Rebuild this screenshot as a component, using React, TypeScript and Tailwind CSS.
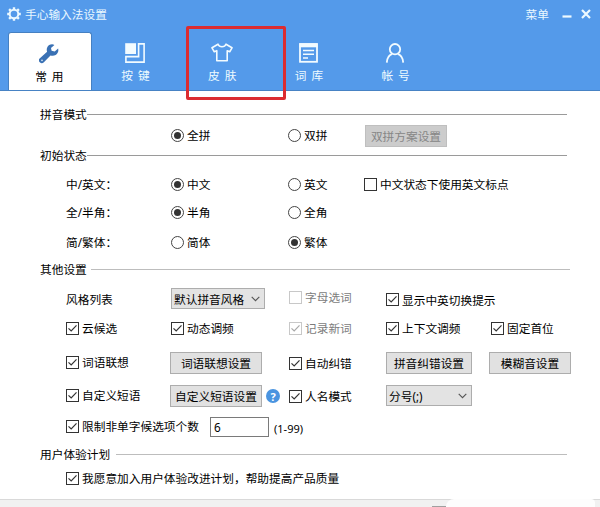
import React from 'react';
import clsx from 'clsx';

const labelFont = "font-['Noto_Sans','Noto_Sans_CJK_SC',sans-serif]";

function GearIcon() {
  return (
    <svg width="14" height="14" viewBox="0 0 14 14" fill="none" stroke="#eaf8ff">
      <circle cx="7" cy="7" r="4.3" strokeWidth="2" />
      <path
        d="M7 0.2v2M7 11.8v2M0.2 7h2M11.8 7h2M2.1 2.1l1.5 1.5M10.4 10.4l1.5 1.5M2.1 11.9l1.5-1.5M10.4 3.6l1.5-1.5"
        strokeWidth="2.4"
      />
    </svg>
  );
}

function WrenchIcon() {
  return (
    <svg width="20" height="20" viewBox="0 0 20 20" fill="#3a71b4">
      <path d="M15.4 0.9C12.6-0.4 9.4 0.8 8.2 3.5c-0.6 1.4-0.6 2.9-0.1 4.2L0.9 14.2a2.7 2.7 0 0 0-0.1 4 2.8 2.8 0 0 0 4.1 0l6.6-6.7c2.9 1 6-0.1 7.3-2.9 0.6-1.3 0.7-2.8 0.3-4.1l-3.4 3.1-3.1-0.8-0.6-2.9z" />
      <circle cx="3" cy="16.4" r="0.8" fill="#dce9f7" />
    </svg>
  );
}

function KeysIcon() {
  return (
    <svg width="20" height="20" viewBox="0 0 20 20" fill="none" stroke="#f2fbff" strokeWidth="1.6">
      <rect x="0.2" y="0.2" width="10.8" height="10.8" fill="#f2fbff" stroke="none" />
      <path d="M13.6 0.9h5.5v18.2H0.9v-5.5h12.7z" />
    </svg>
  );
}

function ShirtIcon() {
  return (
    <svg width="22" height="19" viewBox="0 0 22 19" fill="none" stroke="#f2fbff" strokeWidth="1.6" strokeLinejoin="round">
      <path d="M7 1.2 1 4.8l2.3 4 2.5-1.1v10h10.4v-10l2.5 1.1 2.3-4-6-3.6c-1.3 3.3-6.7 3.3-8 0z" />
    </svg>
  );
}

function BookIcon() {
  return (
    <svg width="19" height="20" viewBox="0 0 19 20" fill="none" stroke="#f2fbff">
      <rect x="1" y="1" width="17" height="17.8" strokeWidth="1.8" />
      <path d="M0.5 2.4h18" strokeWidth="3.8" />
      <path d="M4 7.5h11M4 11.2h11M4 14.9h5" strokeWidth="1.5" />
    </svg>
  );
}

function UserIcon() {
  return (
    <svg width="20" height="20" viewBox="0 0 20 20" fill="none" stroke="#f2fbff" strokeWidth="1.8">
      <circle cx="10" cy="6.2" r="5.2" />
      <path d="M1.8 19.6c0.2-4.4 2-7.5 5.3-8.8M18.2 19.6c-0.2-4.4-2-7.5-5.3-8.8" />
    </svg>
  );
}

const tabs = [
  { label: '常 用', icon: <WrenchIcon />, active: true },
  { label: '按 键', icon: <KeysIcon /> },
  { label: '皮 肤', icon: <ShirtIcon /> },
  { label: '词 库', icon: <BookIcon /> },
  { label: '帐 号', icon: <UserIcon /> },
];

function Check({ label, checked = true, disabled = false, className = '' }: { label: string; checked?: boolean; disabled?: boolean; className?: string }) {
  return (
    <label className={clsx('flex items-center gap-[3px] whitespace-nowrap', disabled && 'text-[#7c7c7c]', className)}>
      <span className={clsx('flex h-[13px] w-[13px] shrink-0 border bg-white', disabled ? 'border-[#c8c8c8] text-[#a8a8a8]' : 'border-[#333] text-[#333]')}>
        {checked && (
          <svg width="11" height="11" viewBox="0 0 11 11" fill="none" stroke="currentColor" strokeWidth="1.2">
            <path d="M1.5 5.3 4.2 8l5.3-5.6" />
          </svg>
        )}
      </span>
      <span>{label}</span>
    </label>
  );
}

function Radio({ label, checked = false }: { label: string; checked?: boolean }) {
  return (
    <label className="flex items-center gap-[3px] whitespace-nowrap">
      <span className="flex h-[13px] w-[13px] shrink-0 items-center justify-center rounded-full border border-[#444] bg-white">
        {checked && <span className="h-[7px] w-[7px] rounded-full bg-[#333]" />}
      </span>
      <span>{label}</span>
    </label>
  );
}

function Button({ children, disabled = false, className = '' }: { children: React.ReactNode; disabled?: boolean; className?: string }) {
  return (
    <button
      className={clsx(
        'flex h-[22px] items-center justify-center whitespace-nowrap border',
        disabled ? 'border-[#bfbfbf] bg-[#cccccc] text-[#868686]' : 'border-[#adadad] bg-[#e1e1e1]',
        className
      )}
    >
      {children}
    </button>
  );
}

function Select({ value, className = '' }: { value: string; className?: string }) {
  return (
    <div className={clsx('flex h-[21px] items-center justify-between border border-[#adadad] bg-[#e3e3e3] pr-[4px] pl-[2px] whitespace-nowrap', className)}>
      <span>{value}</span>
      <svg width="9" height="6" viewBox="0 0 9 6" fill="none" stroke="#555" strokeWidth="1.1">
        <path d="M0.7 0.8 4.5 4.6 8.3 0.8" />
      </svg>
    </div>
  );
}

function SectionTitle({ title, className = '' }: { title: string; className?: string }) {
  return (
    <div className={clsx('flex h-[18px] items-center pl-[40px]', className)}>
      <span className="whitespace-nowrap">{title}</span>
      <span className="h-px flex-1 bg-[#9a9a9a]" />
    </div>
  );
}

const stateRow = 'grid h-[28px] grid-cols-[105px_117px_76px_1fr] items-center pl-[66px]';
const otherRow = 'grid grid-cols-[105px_118px_97px_105px_1fr] items-center pl-[66px]';

export default function App() {
  return (
    <div className={clsx('relative flex h-[507px] w-[600px] flex-col overflow-hidden bg-white text-[11.7px] leading-[18px] text-black', labelFont)}>
      <header className="flex h-[91px] shrink-0 flex-col border-b border-[#4783c4] bg-[#549aea]">
        <div className="flex h-[32px] shrink-0 items-center pr-[8px] pb-[4px] pl-[7px] text-[#eaf8ff]">
          <GearIcon />
          <span className="ml-[4px]">手心输入法设置</span>
          <span className="ml-auto">菜单</span>
          <svg className="ml-[13px]" width="30" height="12" viewBox="0 0 30 12" fill="none" stroke="#eefaff" strokeWidth="2.2">
            <path d="M0.5 8.5h9" />
            <path d="m20 2 8 8M28 2l-8 8" />
          </svg>
        </div>
        <nav className="grid h-[59px] grid-cols-[86.7px_86.7px_86.7px_86.7px_86.7px] pl-[6px]">
          {tabs.map((tab) => (
            <div
              key={tab.label}
              className={clsx(
                'flex flex-col items-center pt-[10px] pr-[2px]',
                tab.active ? 'mr-[1px] ml-[2px] rounded-t-[3px] border border-b-0 border-[#4580c2] bg-white text-black' : 'text-[#eefaff]'
              )}
            >
              <span className="flex h-[21px] items-center">{tab.icon}</span>
              <span className="mt-[3px] pl-[2px] tracking-[1px]">{tab.label}</span>
            </div>
          ))}
        </nav>
      </header>

      <main className="flex flex-1 flex-col pt-[14px]">
        <SectionTitle title="拼音模式" className="mr-[33px]" />
        <div className="mt-[2px] grid h-[22px] grid-cols-[105px_117px_77px_1fr] items-center pl-[66px]">
          <span />
          <div className="pb-[2px]"><Radio label="全拼" checked /></div>
          <div className="pb-[2px]"><Radio label="双拼" /></div>
          <Button disabled className="w-[82px]">双拼方案设置</Button>
        </div>

        <SectionTitle title="初始状态" className="-mt-px mr-[33px]" />
        <div className={clsx(stateRow, 'mt-[6px]')}>
          <span>中/英文：</span>
          <Radio label="中文" checked />
          <Radio label="英文" />
          <Check label="中文状态下使用英文标点" checked={false} />
        </div>
        <div className={stateRow}>
          <span>全/半角：</span>
          <Radio label="半角" checked />
          <Radio label="全角" />
        </div>
        <div className={clsx(stateRow, 'mt-[2px]')}>
          <span>简/繁体：</span>
          <Radio label="简体" />
          <Radio label="繁体" checked />
        </div>

        <SectionTitle title="其他设置" className="mt-[4px] mr-[30px] [&>span:last-child]:ml-[4px] [&>span:last-child]:bg-[#bdbdbd]" />
        <div className={clsx(otherRow, 'mt-[10px] h-[21px]')}>
          <span>风格列表</span>
          <Select value="默认拼音风格" className="w-[94px]" />
          <Check label="字母选词" checked={false} disabled className="mb-[3px]" />
          <Check label="显示中英切换提示" className="mt-[2px]" />
        </div>
        <div className={clsx(otherRow, 'mt-[9px] h-[20px]')}>
          <Check label="云候选" />
          <Check label="动态调频" />
          <Check label="记录新词" disabled />
          <Check label="上下文调频" />
          <Check label="固定首位" />
        </div>
        <div className={clsx(otherRow, 'mt-[14px] h-[22px]')}>
          <Check label="词语联想" className="mb-[2px]" />
          <Button className="-ml-px w-[92px]">词语联想设置</Button>
          <Check label="自动纠错" />
          <Button className="w-[86px]">拼音纠错设置</Button>
          <Button className="-ml-[2px] w-[82px]">模糊音设置</Button>
        </div>
        <div className={clsx(otherRow, 'mt-[11px] h-[22px]')}>
          <Check label="自定义短语" className="mb-[2px]" />
          <div className="-ml-px flex items-center gap-[4px]">
            <Button className="w-[92px]">自定义短语设置</Button>
            <span className="flex h-[14px] w-[14px] items-center justify-center rounded-full bg-[#4a94e0] text-[11px] leading-none font-bold text-white">?</span>
          </div>
          <Check label="人名模式" />
          <Select value="分号(;)" className="mb-px w-[86px]" />
        </div>
        <div className="mt-[10px] flex h-[20px] items-center pl-[66px]">
          <Check label="限制非单字候选项个数" className="mb-[2px] w-[144px]" />
          <div className="flex h-[20px] w-[59px] items-center border border-[#7a7a7a] bg-white pl-[3px]">6</div>
          <span className="ml-[5px] pt-[3px] text-[11px]">(1-99)</span>
        </div>

        <SectionTitle title="用户体验计划" className="mt-[8px] mr-[33px] [&>span:last-child]:ml-[6px] [&>span:last-child]:bg-[#bdbdbd]" />
        <div className="mt-[5px] flex h-[20px] items-center pl-[66px]">
          <Check label="我愿意加入用户体验改进计划，帮助提高产品质量" />
        </div>
      </main>

      <footer className="flex h-[8px] shrink-0 border-t border-[#d9d9d9] bg-[#f1f1f1]">
        <span className="mt-[6px] ml-[432px] h-px w-[14px] bg-[#a0a0a0]" />
        <span className="-mt-px h-[8px] w-[149px] rounded-tl-[8px] rounded-tr-[4px] bg-[#fdfdfd]" />
      </footer>

      {/* highlight around the skin tab */}
      <div className="absolute top-[26px] left-[186px] h-[74px] w-[100px] rounded-[2px] border-[3px] border-[#dc2c30]" />
    </div>
  );
}
